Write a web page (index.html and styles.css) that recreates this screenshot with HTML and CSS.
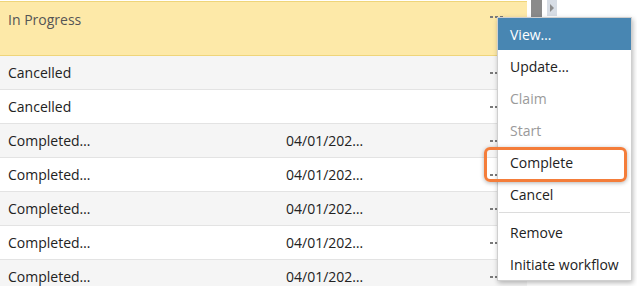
FILE: index.html
```html
<!DOCTYPE html>
<html lang="en">
<head>
<meta charset="utf-8">
<title>Tasks</title>
<link rel="stylesheet" href="styles.css">
</head>
<body>
<div class="page">
  <div class="grid">
    <div class="row row--active">
      <div class="cell status status--muted">In Progress</div>
      <div class="cell date"></div>
      <div class="cell more"><span class="dots"><i></i><i></i><i></i></span></div>
    </div>
    <div class="row row--alt">
      <div class="cell status">Cancelled</div>
      <div class="cell date"></div>
      <div class="cell more"><span class="dots"><i></i><i></i><i></i></span></div>
    </div>
    <div class="row">
      <div class="cell status">Cancelled</div>
      <div class="cell date"></div>
      <div class="cell more"><span class="dots"><i></i><i></i><i></i></span></div>
    </div>
    <div class="row row--alt">
      <div class="cell status">Completed…</div>
      <div class="cell date">04/01/202…</div>
      <div class="cell more"><span class="dots"><i></i><i></i><i></i></span></div>
    </div>
    <div class="row">
      <div class="cell status">Completed…</div>
      <div class="cell date">04/01/202…</div>
      <div class="cell more"><span class="dots"><i></i><i></i><i></i></span></div>
    </div>
    <div class="row row--alt">
      <div class="cell status">Completed…</div>
      <div class="cell date">04/01/202…</div>
      <div class="cell more"><span class="dots"><i></i><i></i><i></i></span></div>
    </div>
    <div class="row">
      <div class="cell status">Completed…</div>
      <div class="cell date">04/01/202…</div>
      <div class="cell more"><span class="dots"><i></i><i></i><i></i></span></div>
    </div>
    <div class="row row--alt">
      <div class="cell status">Completed…</div>
      <div class="cell date">04/01/202…</div>
      <div class="cell more"><span class="dots"><i></i><i></i><i></i></span></div>
    </div>
  </div>
  <div class="scrollbar"></div>
  <div class="pager">
    <svg class="pager-arrow" width="4" height="8" viewBox="0 0 4 8"><path d="M0 0 L4 4 L0 8 Z" fill="#8c8c8c"/></svg>
  </div>

  <ul class="menu">
    <li class="menu-item menu-item--active">View…</li>
    <li class="menu-item">Update…</li>
    <li class="menu-item menu-item--disabled">Claim</li>
    <li class="menu-item menu-item--disabled">Start</li>
    <li class="menu-item">Complete</li>
    <li class="menu-item">Cancel</li>
    <li class="menu-sep"></li>
    <li class="menu-item">Remove</li>
    <li class="menu-item">Initiate workflow</li>
  </ul>
  <div class="focus-ring"></div>
</div>
</body>
</html>
```
FILE: styles.css
```css
* { box-sizing: border-box; }
html, body { margin: 0; padding: 0; background: #fff; }
body {
  font-family: "Open Sans", "Noto Sans", sans-serif;
  font-size: 14px;
  color: #222;
}
.page {
  position: relative;
  display: flex;
  align-items: flex-start;
  width: 637px;
  height: 286px;
  overflow: hidden;
}
.grid {
  width: 527px;
  margin-top: 1px;
  flex: none;
}
.row {
  display: grid;
  grid-template-columns: 278px 1fr 37px;
  align-items: center;
  height: 34px;
  padding-left: 8px;
  border-bottom: 1px solid #e3e3e3;
  background: #fff;
}
.row--alt { background: #f5f5f5; }
.row--active {
  height: 55px;
  align-items: start;
  padding-top: 8px;
  background: #fde9a8;
  border-top: 1px solid #efd57a;
  border-bottom: 1px solid #efd57a;
}
.cell { white-space: nowrap; overflow: hidden; line-height: 19px; }
.status--muted { color: #555; }
.more { display: flex; align-items: center; }
.row--active .more { padding-top: 6px; }
.dots { display: flex; gap: 2px; height: 2px; }
.dots i { display: block; width: 3px; height: 2px; background: #7a7a7a; }
.scrollbar {
  width: 11px;
  height: 22px;
  margin-left: 4px;
  background: #8a8a8a;
  flex: none;
}
.pager {
  width: 10px;
  height: 16px;
  margin-left: 5px;
  background: #d7dde5;
  display: flex;
  justify-content: center;
  padding-top: 4px;
  flex: none;
}
.pager-arrow { display: block; }
.menu {
  position: absolute;
  left: 497px;
  top: 17px;
  width: 135px;
  margin: 0;
  padding: 0;
  list-style: none;
  background: #fff;
  border: 1px solid #cfcfcf;
  box-shadow: 1px 2px 5px rgba(0, 0, 0, 0.28);
}
.menu-item {
  height: 32px;
  line-height: 33px;
  padding-left: 12px;
  color: #222;
  white-space: nowrap;
}
.menu-item--active { background: #4886b2; color: #fff; }
.menu-item--disabled { color: #9a9a9a; }
.menu-sep {
  height: 1px;
  margin: 2px 1px 3px;
  background: #dcdcdc;
}
.focus-ring {
  position: absolute;
  left: 484px;
  top: 147px;
  width: 143px;
  height: 35px;
  border: 3px solid #f47d3a;
  border-radius: 6px;
  box-shadow: 0 1px 4px rgba(0, 0, 0, 0.3);
}
```
